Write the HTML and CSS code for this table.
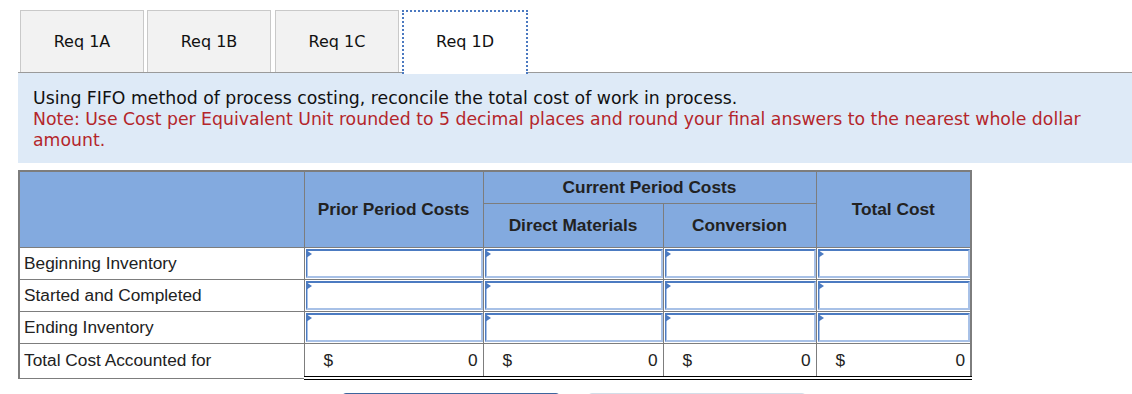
FILE: index.html
```html
<!DOCTYPE html>
<html lang="en">
<head>
<meta charset="utf-8">
<title>Req 1D</title>
<link rel="stylesheet" href="styles.css">
</head>
<body>
<div class="page">
  <div class="tabs">
    <button class="tab">Req 1A</button>
    <button class="tab">Req 1B</button>
    <button class="tab">Req 1C</button>
    <button class="tab active">Req 1D</button>
  </div>

  <div class="prompt">
    <p class="question">Using FIFO method of process costing, reconcile the total cost of work in process.</p>
    <p class="note">Note: Use Cost per Equivalent Unit rounded to 5 decimal places and round your final answers to the nearest whole dollar amount.</p>
  </div>

  <table class="grid">
    <colgroup>
      <col class="c-label">
      <col class="c-prior">
      <col class="c-dm">
      <col class="c-conv">
      <col class="c-total">
    </colgroup>
    <thead>
      <tr class="h1">
        <th rowspan="2"></th>
        <th rowspan="2">Prior Period Costs</th>
        <th colspan="2">Current Period Costs</th>
        <th rowspan="2">Total Cost</th>
      </tr>
      <tr class="h2">
        <th>Direct Materials</th>
        <th>Conversion</th>
      </tr>
    </thead>
    <tbody>
      <tr class="entry">
        <td class="label">Beginning Inventory</td>
        <td class="in"><span class="box"></span></td>
        <td class="in"><span class="box"></span></td>
        <td class="in"><span class="box"></span></td>
        <td class="in"><span class="box"></span></td>
      </tr>
      <tr class="entry">
        <td class="label">Started and Completed</td>
        <td class="in"><span class="box"></span></td>
        <td class="in"><span class="box"></span></td>
        <td class="in"><span class="box"></span></td>
        <td class="in"><span class="box"></span></td>
      </tr>
      <tr class="entry">
        <td class="label">Ending Inventory</td>
        <td class="in"><span class="box"></span></td>
        <td class="in"><span class="box"></span></td>
        <td class="in"><span class="box"></span></td>
        <td class="in"><span class="box"></span></td>
      </tr>
      <tr class="sum">
        <td class="label">Total Cost Accounted for</td>
        <td class="amt"><span class="cur">$</span><span class="val">0</span></td>
        <td class="amt"><span class="cur">$</span><span class="val">0</span></td>
        <td class="amt"><span class="cur">$</span><span class="val">0</span></td>
        <td class="amt"><span class="cur">$</span><span class="val">0</span></td>
      </tr>
    </tbody>
  </table>

  <div class="actions">
    <button class="btn prev" aria-label="Previous requirement"></button>
    <button class="btn next" aria-label="Next requirement"></button>
  </div>
</div>
</body>
</html>
```

FILE: styles.css
```css
html, body {
  margin: 0;
  padding: 0;
  background: #fff;
}

.page {
  padding: 10px 0 0 18px;
  font-family: "Liberation Sans", Arial, sans-serif;
  color: #222;
}

/* tab strip */
.tabs {
  display: flex;
  gap: 3px;
  padding-left: 2px;
  border-bottom: 1px solid #9a9a9a;
  height: 62px;
  align-items: flex-start;
}

.tab {
  box-sizing: border-box;
  width: 124px;
  height: 62px;
  margin: 0;
  padding: 0;
  background: #f2f2f2;
  border: 1px solid #c9c9c9;
  border-bottom: none;
  font-family: "DejaVu Sans", Verdana, sans-serif;
  font-size: 16px;
  color: #111;
  cursor: pointer;
}

.tab:nth-child(3) {
  margin-left: 1px;
}

.tab.active {
  width: 126px;
  height: 64px;
  padding-bottom: 3px;
  background: #fff;
  border: 2px dotted #4b79c0;
  border-bottom: none;
  position: relative;
  z-index: 1;
}

/* question prompt */
.prompt {
  background: #deeaf7;
  padding: 15px 15px 12px;
  font-family: "DejaVu Sans", Verdana, sans-serif;
  font-size: 17.3px;
  line-height: 21px;
}

.prompt p {
  margin: 0;
}

.question {
  color: #111;
}

.note {
  color: #b4262b;
}

/* cost reconciliation grid */
.grid {
  margin-top: 7px;
  border-collapse: collapse;
  width: 952px;
  table-layout: fixed;
  font-size: 17.3px;
  border: 2px solid #7d7d7d;
  border-bottom: none;
}

.c-label { width: 285px; }
.c-prior { width: 179px; }
.c-dm { width: 180px; }
.c-conv { width: 153px; }
.c-total { width: 155px; }

.grid th {
  background: #83aadf;
  border: 1px solid #7d7d7d;
  font-weight: bold;
  color: #222;
  padding: 0;
  text-align: center;
}

.grid .h1 th {
  height: 31px;
}

.grid .h2 th {
  height: 43px;
}

.grid td {
  border: 1px solid #7d7d7d;
  padding: 0;
}

.grid tr.entry td {
  height: 31px;
}

.grid td.label {
  padding-left: 4px;
  color: #222;
}

.grid td.in {
  padding: 0 0 0 1px;
}

.box {
  position: relative;
  display: block;
  box-sizing: border-box;
  height: 29px;
  background: #fff;
  border: 2px solid #a8c1e7;
  border-top-color: #4c7bc1;
  border-left: 1px solid #4c7bc1;
  box-shadow: inset 1px 0 0 #a8c1e7;
}

/* small flag marking an editable cell */
.box::before {
  content: "";
  position: absolute;
  left: -1px;
  top: -1px;
  border-left: 6px solid #4c7bc1;
  border-top: 4px solid transparent;
  border-bottom: 4px solid transparent;
}

.grid tr.sum td {
  height: 32px;
}

.grid tr.sum td.amt {
  border-top: 1px solid #000;
  border-bottom: 4px double #000;
  padding: 0 5px 0 19px;
}

.amt {
  white-space: nowrap;
}

.amt .cur {
  float: left;
}

.amt .val {
  float: right;
}

/* navigation buttons below the grid */
.actions {
  display: flex;
  gap: 28px;
  margin-top: 13px;
  padding-left: 324px;
}

.btn {
  width: 218px;
  height: 40px;
  border-radius: 4px;
}

.btn.prev {
  background: #4a73ac;
  border: 1px solid #3d659d;
}

.btn.next {
  background: #e4ebf3;
  border: 1px solid #d3dde8;
}
```
